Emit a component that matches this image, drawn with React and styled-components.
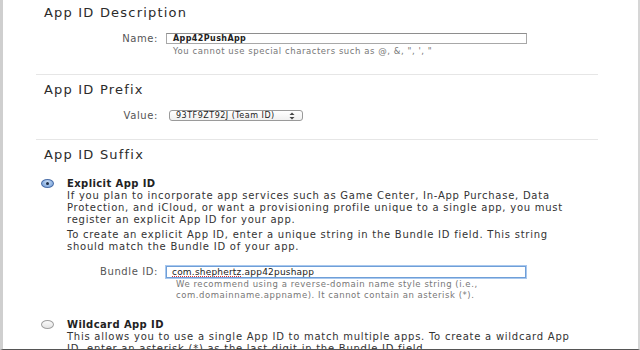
import React from "react";
import styled, { createGlobalStyle } from "styled-components";

const GlobalStyle = createGlobalStyle`
    html, body {
        margin: 0;
        padding: 0;
        background: #fff;
    }
    body {
        font-family: "DejaVu Sans", "Liberation Sans", sans-serif;
        color: #333;
    }
`;

const App = () => {
    return <Frame>
        <GlobalStyle />

        <Heading $top={5}>App ID Description</Heading>
        <FieldRow $top={12} $labelWidth={155}>
            <Label>Name:</Label>
            <TextField $width={361}>App42PushApp</TextField>
        </FieldRow>
        <Helper $left={170} $top={2}>You cannot use special characters such as @, &amp;, ", ', "</Helper>
        <Divider $top={17} />

        <Heading $top={7}>App ID Prefix</Heading>
        <FieldRow $top={12} $labelWidth={155}>
            <Label>Value:</Label>
            <Select>
                <span>93TF9ZT92J (Team ID)</span>
                <Arrows />
            </Select>
        </FieldRow>
        <Divider $top={18} />

        <Heading $top={7}>App ID Suffix</Heading>

        <Option $top={14}>
            <Radio $checked />
            <OptionTitle>Explicit App ID</OptionTitle>
        </Option>
        <OptionBody>
            <Para>
                If you plan to incorporate app services such as Game Center, In-App Purchase, Data<br />
                Protection, and iCloud, or want a provisioning profile unique to a single app, you must<br />
                register an explicit App ID for your app.
            </Para>
            <Para $top={3}>
                To create an explicit App ID, enter a unique string in the Bundle ID field. This string<br />
                should match the Bundle ID of your app.
            </Para>
        </OptionBody>
        <FieldRow $top={13} $labelWidth={155}>
            <Label>Bundle ID:</Label>
            <TextField $width={360} $focused>
                <Misspelled>com.shephertz</Misspelled>.app42pushapp
            </TextField>
        </FieldRow>
        <Helper $left={173} $top={2}>
            We recommend using a reverse-domain name style string (i.e.,<br />
            com.domainname.appname). It cannot contain an asterisk (*).
        </Helper>

        <Option $top={17}>
            <Radio />
            <OptionTitle>Wildcard App ID</OptionTitle>
        </Option>
        <OptionBody>
            <Para>
                This allows you to use a single App ID to match multiple apps. To create a wildcard App<br />
                ID, enter an asterisk (*) as the last digit in the Bundle ID field.
            </Para>
        </OptionBody>
    </Frame>
}

const Arrows = () => (
    <svg width="6" height="8" viewBox="0 0 6 8">
        <path d="M3 0.5 L5.5 3 H0.5 Z" fill="#444" />
        <path d="M3 7.5 L5.5 5 H0.5 Z" fill="#444" />
    </svg>
);

const Frame = styled.div`
    box-sizing: border-box;
    width: 640px;
    height: 350px;
    overflow: hidden;
    border-left: 3px solid #cfcfcf;
    border-right: 2px solid #d6d6d6;
    border-bottom: 1px solid #555;
`;

const Heading = styled.h2`
    margin: ${p => p.$top}px 0 0 41px;
    font-size: 13px;
    line-height: 16px;
    font-weight: normal;
    letter-spacing: 1.2px;
    color: #2b2b2b;
`;

const FieldRow = styled.div`
    display: flex;
    align-items: center;
    gap: 8px;
    margin-top: ${p => p.$top}px;
    height: 11px;

    & > :first-child {
        width: ${p => p.$labelWidth}px;
    }
`;

const Label = styled.div`
    flex: none;
    text-align: right;
    font-size: 10px;
    letter-spacing: 0.6px;
    color: #555;
    line-height: 11px;
`;

const TextField = styled.div`
    box-sizing: border-box;
    width: ${p => p.$width}px;
    height: ${p => (p.$focused ? 12 : 11)}px;
    padding-left: ${p => (p.$focused ? 5 : 6)}px;
    border: 1px solid ${p => (p.$focused ? "#6f9fd8" : "#a8a8a8")};
    border-top-color: ${p => (p.$focused ? "#6f9fd8" : "#8e8e8e")};
    box-shadow: ${p => (p.$focused ? "0 0 0 1px #a9c8ee" : "none")};
    background: #fff;
    font-size: ${p => (p.$focused ? 9 : 8)}px;
    font-weight: ${p => (p.$focused ? "normal" : "bold")};
    letter-spacing: ${p => (p.$focused ? 0.2 : 0.4)}px;
    line-height: ${p => (p.$focused ? 10 : 9)}px;
    color: #222;
    white-space: nowrap;
`;

const Misspelled = styled.span`
    text-decoration: underline dotted #d33;
    text-underline-offset: 1px;
`;

const Select = styled.div`
    box-sizing: border-box;
    display: flex;
    align-items: center;
    justify-content: space-between;
    width: 134px;
    height: 11px;
    margin-left: 3px;
    padding: 0 7px 0 6px;
    border: 1px solid #9a9a9a;
    border-radius: 3px;
    background: linear-gradient(#fff, #f0f0f0);
    font-size: 8px;
    letter-spacing: 0.5px;
    color: #222;
    white-space: nowrap;
`;

const Helper = styled.div`
    margin: ${p => p.$top}px 0 0 ${p => p.$left}px;
    font-size: 8.5px;
    line-height: 11px;
    letter-spacing: 0.55px;
    color: #777;
    white-space: nowrap;
`;

const Divider = styled.hr`
    margin: ${p => p.$top}px 40px 0 33px;
    border: none;
    border-top: 1px solid #e6e6e6;
`;

const Option = styled.div`
    display: flex;
    align-items: center;
    gap: 13px;
    margin: ${p => p.$top}px 0 0 38px;
    height: 13px;
`;

const Radio = styled.span`
    box-sizing: border-box;
    position: relative;
    width: 13px;
    height: 9px;
    border-radius: 50%;
    border: 1px solid ${p => (p.$checked ? "#4a6ea8" : "#a0a0a0")};
    background: ${p => (p.$checked
        ? "radial-gradient(ellipse at 50% 30%, #c7dcf5, #6f9bd6)"
        : "linear-gradient(#fafafa, #e4e4e4)")};

    &::after {
        content: "";
        display: ${p => (p.$checked ? "block" : "none")};
        position: absolute;
        left: 4px;
        top: 2px;
        width: 3px;
        height: 3px;
        border-radius: 50%;
        background: #1f2f48;
    }
`;

const OptionTitle = styled.div`
    font-size: 10px;
    font-weight: bold;
    letter-spacing: 0.4px;
    line-height: 13px;
    color: #222;
`;

const OptionBody = styled.div`
    margin-left: 64px;
`;

const Para = styled.p`
    margin: ${p => p.$top || 0}px 0 0 0;
    font-size: 10px;
    line-height: 12px;
    letter-spacing: 0.75px;
    color: #333;
    white-space: nowrap;
`;

export default App;
